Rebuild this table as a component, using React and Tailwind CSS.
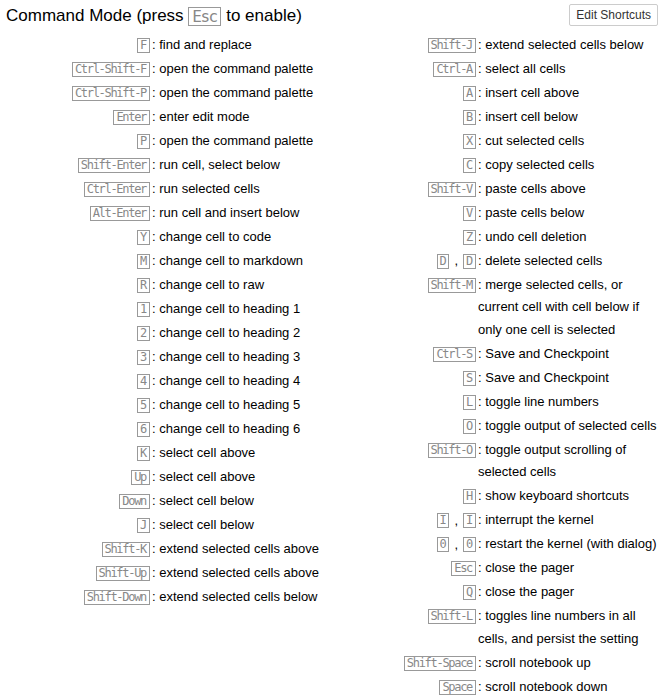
const leftShortcuts = [
  [['F'], 'find and replace'],
  [['Ctrl-Shift-F'], 'open the command palette'],
  [['Ctrl-Shift-P'], 'open the command palette'],
  [['Enter'], 'enter edit mode'],
  [['P'], 'open the command palette'],
  [['Shift-Enter'], 'run cell, select below'],
  [['Ctrl-Enter'], 'run selected cells'],
  [['Alt-Enter'], 'run cell and insert below'],
  [['Y'], 'change cell to code'],
  [['M'], 'change cell to markdown'],
  [['R'], 'change cell to raw'],
  [['1'], 'change cell to heading 1'],
  [['2'], 'change cell to heading 2'],
  [['3'], 'change cell to heading 3'],
  [['4'], 'change cell to heading 4'],
  [['5'], 'change cell to heading 5'],
  [['6'], 'change cell to heading 6'],
  [['K'], 'select cell above'],
  [['Up'], 'select cell above'],
  [['Down'], 'select cell below'],
  [['J'], 'select cell below'],
  [['Shift-K'], 'extend selected cells above'],
  [['Shift-Up'], 'extend selected cells above'],
  [['Shift-Down'], 'extend selected cells below'],
];

const rightShortcuts = [
  [['Shift-J'], 'extend selected cells below'],
  [['Ctrl-A'], 'select all cells'],
  [['A'], 'insert cell above'],
  [['B'], 'insert cell below'],
  [['X'], 'cut selected cells'],
  [['C'], 'copy selected cells'],
  [['Shift-V'], 'paste cells above'],
  [['V'], 'paste cells below'],
  [['Z'], 'undo cell deletion'],
  [['D', 'D'], 'delete selected cells'],
  [['Shift-M'], 'merge selected cells, or current cell with cell below if only one cell is selected'],
  [['Ctrl-S'], 'Save and Checkpoint'],
  [['S'], 'Save and Checkpoint'],
  [['L'], 'toggle line numbers'],
  [['O'], 'toggle output of selected cells'],
  [['Shift-O'], 'toggle output scrolling of selected cells'],
  [['H'], 'show keyboard shortcuts'],
  [['I', 'I'], 'interrupt the kernel'],
  [['0', '0'], 'restart the kernel (with dialog)'],
  [['Esc'], 'close the pager'],
  [['Q'], 'close the pager'],
  [['Shift-L'], 'toggles line numbers in all cells, and persist the setting'],
  [['Shift-Space'], 'scroll notebook up'],
  [['Space'], 'scroll notebook down'],
];

const Kbd = ({ children, big }) => (
  <kbd
    className={
      big
        ? "inline-block border border-[#999] pl-[3px] pr-[4px] text-[#888] font-['DejaVu_Sans_Mono',monospace] text-[16px] leading-[17px] tracking-[-1.6px]"
        : "inline-block border border-[#999] pl-[2px] pr-[3px] text-[#888] font-['DejaVu_Sans_Mono',monospace] text-[12px] leading-[13px] tracking-[-1.3px]"
    }
  >
    {children}
  </kbd>
);

const ShortcutRow = ({ keys, descr }) => (
  <div className="flex py-[0.75px]">
    <div className="w-[146px] pr-[2px] h-[22.5px] flex items-center justify-end shrink-0">
      {keys.map((k, i) => (
        <span key={i} className="flex items-center">
          {i > 0 && <span className="px-[5px] text-[13px]">,</span>}
          <Kbd>{k}</Kbd>
        </span>
      ))}
    </div>
    <div className="w-[180px] text-[13px] leading-[22.5px] text-black">
      : {descr}
    </div>
  </div>
);

const App = () => {
  return (
    <div className="w-[666px] min-h-[699px] bg-white pl-[6px] pr-[8px] font-['Liberation_Sans',Arial,sans-serif]">

      <div className="h-[32px] flex items-center justify-between">
        <h4 className="text-[17px] leading-[20px] text-black flex items-center">
          Command Mode (press&nbsp;<Kbd big>Esc</Kbd>&nbsp;to enable)
        </h4>
        <button className="h-[22px] px-[6px] border border-[#ccc] bg-white text-[12px] text-[#333] rounded-[2px] mt-[-2px]">
          Edit Shortcuts
        </button>
      </div>

      <div className="flex pt-px">
        <div className="w-[326px]">
          {leftShortcuts.map(([keys, descr], i) => (
            <ShortcutRow key={i} keys={keys} descr={descr} />
          ))}
        </div>
        <div className="w-[326px]">
          {rightShortcuts.map(([keys, descr], i) => (
            <ShortcutRow key={i} keys={keys} descr={descr} />
          ))}
        </div>
      </div>

    </div>
  );
};

export default App;
